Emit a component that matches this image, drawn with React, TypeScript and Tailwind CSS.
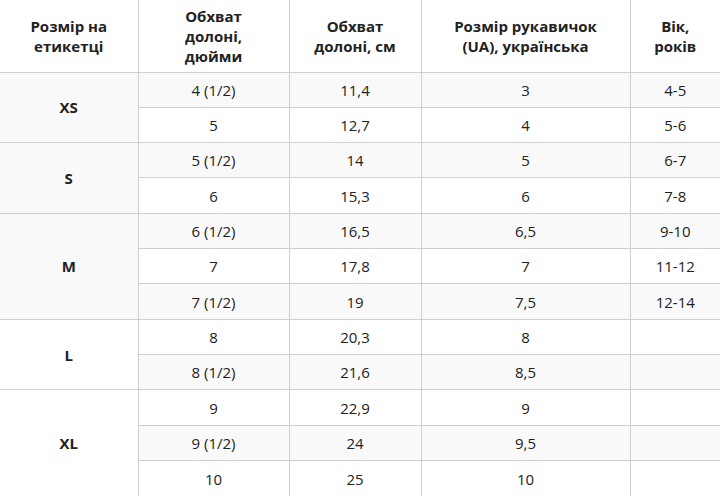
import React from "react";

type Row = { size?: string; span?: number; inch: string; cm: string; ua: string; age: string };

const rows: Row[] = [
  { size: "XS", span: 2, inch: "4 (1/2)", cm: "11,4", ua: "3", age: "4-5" },
  { inch: "5", cm: "12,7", ua: "4", age: "5-6" },
  { size: "S", span: 2, inch: "5 (1/2)", cm: "14", ua: "5", age: "6-7" },
  { inch: "6", cm: "15,3", ua: "6", age: "7-8" },
  { size: "M", span: 3, inch: "6 (1/2)", cm: "16,5", ua: "6,5", age: "9-10" },
  { inch: "7", cm: "17,8", ua: "7", age: "11-12" },
  { inch: "7 (1/2)", cm: "19", ua: "7,5", age: "12-14" },
  { size: "L", span: 2, inch: "8", cm: "20,3", ua: "8", age: "" },
  { inch: "8 (1/2)", cm: "21,6", ua: "8,5", age: "" },
  { size: "XL", span: 3, inch: "9", cm: "22,9", ua: "9", age: "" },
  { inch: "9 (1/2)", cm: "24", ua: "9,5", age: "" },
  { inch: "10", cm: "25", ua: "10", age: "" },
];

export default function App() {
  const cell = "border border-[#cfcfcf] text-center align-middle px-2 p-0";
  return (
    <div
      className="w-[720px] h-[496px] overflow-hidden bg-white text-[#222] text-[15px] leading-[20px]"
      style={{ fontFamily: '"Open Sans", "Noto Sans", sans-serif' }}
    >
      <table className="w-[720px] border-collapse border-hidden table-fixed">
        <colgroup>
          <col className="w-[138px]" />
          <col className="w-[151px]" />
          <col className="w-[132px]" />
          <col className="w-[209px]" />
          <col className="w-[90px]" />
        </colgroup>
        <thead>
          <tr className="h-[72px] bg-white">
            <th className={`${cell} font-bold`}>Розмір на<br />етикетці</th>
            <th className={`${cell} font-bold`}>Обхват<br />долоні,<br />дюйми</th>
            <th className={`${cell} font-bold`}>Обхват<br />долоні, см</th>
            <th className={`${cell} font-bold`}>Розмір рукавичок<br />(UA), українська</th>
            <th className={`${cell} font-bold`}>Вік,<br />років</th>
          </tr>
        </thead>
        <tbody>
          {rows.map((r, i) => (
            <tr key={i} className={`h-[35.33px] ${i % 2 === 0 ? "bg-[#f9f9f9]" : "bg-white"}`}>
              {r.size && (
                <td rowSpan={r.span} className={`${cell} font-bold`}>
                  {r.size}
                </td>
              )}
              <td className={cell}>{r.inch}</td>
              <td className={cell}>{r.cm}</td>
              <td className={cell}>{r.ua}</td>
              <td className={cell}>{r.age}</td>
            </tr>
          ))}
        </tbody>
      </table>
    </div>
  );
}
